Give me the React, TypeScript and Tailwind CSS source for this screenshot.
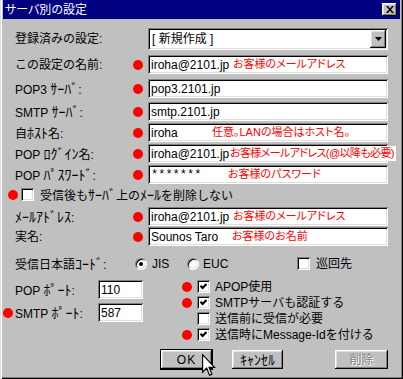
import React from 'react';

const sunken =
  'bg-white shadow-[inset_1px_1px_#808080,inset_-1px_-1px_#ffffff,inset_2px_2px_#000000,inset_-2px_-2px_#dfdfdf]';
const raised =
  'bg-[#c0c0c0] shadow-[inset_-1px_-1px_#000000,inset_1px_1px_#ffffff,inset_-2px_-2px_#808080,inset_2px_2px_#dfdfdf]';

// half-width katakana looks too small in Noto at 12px, bump it a bit
function K({ children }: { children: React.ReactNode }) {
  return <span className="text-[14px]">{children}</span>;
}

function Dot() {
  return <span className="block w-[10px] h-[10px] shrink-0 rounded-full bg-[#ff0000]" />;
}

function Check({ checked }: { checked?: boolean }) {
  return (
    <span className={`relative block w-[13px] h-[13px] shrink-0 ${sunken}`}>
      {checked && (
        <svg className="absolute left-[3px] top-[3px]" width="7" height="7" viewBox="0 0 7 7">
          <polyline points="0.6,2.8 2.6,4.9 6.5,0.9" fill="none" stroke="#000" strokeWidth="2.2" />
        </svg>
      )}
    </span>
  );
}

function Radio({ on }: { on?: boolean }) {
  return (
    <span className="relative block w-[12px] h-[12px] shrink-0 rounded-full bg-white border border-t-[#808080] border-l-[#808080] border-r-white border-b-white shadow-[inset_1px_1px_#000000,inset_-1px_-1px_#dfdfdf]">
      {on && <span className="absolute left-[3px] top-[3px] w-[4px] h-[4px] rounded-full bg-black" />}
    </span>
  );
}

type Row = {
  id: string;
  label: React.ReactNode;
  value: string;
  valueCls?: string;
  note?: string;
  noteCls?: string;
  gap: string;
};

const topRows: Row[] = [
  { id: 'name', label: 'この設定の名前:', value: 'iroha@2101.jp', note: 'お客様のメールアドレス', noteCls: 'left-[85px]', gap: 'mt-[5px]' },
  { id: 'pop3', label: <>POP3 <K>ｻｰﾊﾞ</K>:</>, value: 'pop3.2101.jp', gap: 'mt-[5px]' },
  { id: 'smtp', label: <>SMTP <K>ｻｰﾊﾞ</K>:</>, value: 'smtp.2101.jp', gap: 'mt-[4px]' },
  {
    id: 'host',
    label: <>自<K>ﾎｽﾄ</K>名:</>,
    value: 'iroha',
    note: '任意。LANの場合はホスト名。',
    noteCls: 'left-[64px]',
    gap: 'mt-[2px]',
  },
  {
    id: 'login',
    label: <>POP <K>ﾛｸﾞｲﾝ</K>名:</>,
    value: 'iroha@2101.jp',
    note: 'お客様メールアドレス(@以降も必要)',
    noteCls: 'left-[82px] tracking-[-0.6px]',
    gap: 'mt-[2px]',
  },
  {
    id: 'pass',
    label: <>POP <K>ﾊﾟｽﾜｰﾄﾞ</K>:</>,
    value: '*******',
    valueCls: "font-['Liberation_Mono',monospace] text-[12px]",
    note: 'お客様のパスワード',
    noteCls: 'left-[80px]',
    gap: 'mt-[2px]',
  },
];

const userRows: Row[] = [
  {
    id: 'mail',
    label: <><K>ﾒｰﾙｱﾄﾞﾚｽ</K>:</>,
    value: 'iroha@2101.jp',
    note: 'お客様のメールアドレス',
    noteCls: 'left-[85px]',
    gap: 'mt-[6px]',
  },
  { id: 'real', label: '実名:', value: 'Sounos Taro', note: 'お客様のお名前', noteCls: 'left-[84px]', gap: 'mt-[1px]' },
];

const options = [
  { text: 'APOP使用', dot: true, checked: true },
  { text: 'SMTPサーバも認証する', dot: true, checked: true },
  { text: '送信前に受信が必要', dot: false, checked: false },
  { text: '送信時にMessage-Idを付ける', dot: true, checked: true },
];

function FieldRow({ row }: { row: Row }) {
  return (
    <div className={`${row.gap} flex h-[19px] items-center`}>
      <span className="w-[118px] shrink-0">{row.label}</span>
      <span className="w-[15px] shrink-0">
        <Dot />
      </span>
      <div className={`relative flex w-[240px] h-[19px] items-center pl-[3px] ${sunken}`}>
        <span className={row.valueCls}>{row.value}</span>
        {row.note && (
          <span
            className={`absolute top-[2px] ${row.noteCls} flex h-[15px] items-center whitespace-nowrap bg-white pr-[2px] text-[11px] text-[#ff0000] [font-feature-settings:'palt']`}
          >
            {row.note}
          </span>
        )}
      </div>
    </div>
  );
}

export default function App() {
  return (
    <div className="relative w-[403px] h-[379px] overflow-hidden bg-[#c0c0c0] px-[3px] font-['Liberation_Sans','Noto_Sans_CJK_JP',sans-serif] text-[12px] leading-none text-black shadow-[inset_1px_0_#dfdfdf,inset_2px_0_#ffffff,inset_-1px_-1px_#000000,inset_-2px_-2px_#808080]">
      {/* title bar */}
      <div className="flex h-[19px] items-center justify-between bg-[#000080] pl-[2px] pr-[3px]">
        <span className="text-white [font-feature-settings:'palt']">サーバ別の設定</span>
        <span className={`flex w-[15px] h-[13px] items-center justify-center ${raised}`}>
          <svg width="8" height="7" viewBox="0 0 8 7">
            <path d="M0 0h2l2 2.4L6 0h2L5 3.5 8 7H6L4 4.6 2 7H0l3-3.5z" fill="#000" />
          </svg>
        </span>
      </div>

      <div className="flex flex-col pl-[12px]">
        {/* saved settings */}
        <div className="mt-[9px] flex h-[22px] items-center">
          <span className="w-[133px] shrink-0">登録済みの設定:</span>
          <div className={`relative flex w-[240px] h-[22px] items-center pl-[4px] ${sunken}`}>
            <span>[ 新規作成 ]</span>
            <span className={`absolute right-[2px] top-[2px] flex w-[16px] h-[18px] items-center justify-center ${raised}`}>
              <svg width="7" height="4" viewBox="0 0 7 4">
                <polygon points="0,0 7,0 3.5,4" fill="#000" />
              </svg>
            </span>
          </div>
        </div>

        {topRows.map((r) => (
          <FieldRow key={r.id} row={r} />
        ))}

        {/* delete-on-server */}
        <div className="mt-[4px] -ml-[12px] flex h-[13px] items-center pl-[5px]">
          <Dot />
          <span className="ml-[3px]">
            <Check />
          </span>
          <span className="ml-[6px]">
            受信後も<K>ｻｰﾊﾞ</K>上の<K>ﾒｰﾙ</K>を削除しない
          </span>
        </div>

        {userRows.map((r) => (
          <FieldRow key={r.id} row={r} />
        ))}

        {/* encoding */}
        <div className="mt-[11px] flex h-[13px] items-center">
          <span className="w-[120px] shrink-0">
            受信日本語<K>ｺｰﾄﾞ</K>:
          </span>
          <span className="flex w-[52px] items-center">
            <Radio on />
            <span className="ml-[5px]">JIS</span>
          </span>
          <span className="flex w-[110px] items-center">
            <Radio />
            <span className="ml-[4px]">EUC</span>
          </span>
          <Check />
          <span className="ml-[6px]">巡回先</span>
        </div>

        {/* ports + options */}
        <div className="mt-[10px] flex">
          <div className="flex w-[128px] shrink-0 flex-col">
            <div className="-ml-[12px] flex h-[19px] items-center">
              <span className="w-[12px] shrink-0" />
              <span className="w-[83px] shrink-0">
                POP <K>ﾎﾟｰﾄ</K>:
              </span>
              <div className={`flex w-[45px] h-[19px] items-center pl-[3px] ${sunken}`}>110</div>
            </div>
            <div className="mt-[4px] -ml-[12px] flex h-[19px] items-center">
              <span className="w-[12px] shrink-0">
                <Dot />
              </span>
              <span className="w-[83px] shrink-0">
                SMTP <K>ﾎﾟｰﾄ</K>:
              </span>
              <div className={`flex w-[45px] h-[19px] items-center pl-[3px] ${sunken}`}>587</div>
            </div>
          </div>
          <div className="ml-[39px] flex flex-col gap-[3px]">
            {options.map((o) => (
              <div key={o.text} className="flex h-[13px] items-center">
                <span className="w-[15px] shrink-0">{o.dot && <Dot />}</span>
                <Check checked={o.checked} />
                <span className="ml-[5px]">{o.text}</span>
              </div>
            ))}
          </div>
        </div>

        {/* buttons */}
        <div className="mt-[8px] flex items-start">
          <div className="ml-[145px] w-[53px] h-[21px] border border-black">
            <div className={`flex h-full items-center justify-center tracking-[1px] ${raised}`}>OK</div>
          </div>
          <div className={`ml-[19px] mt-[1px] flex w-[51px] h-[19px] items-center justify-center ${raised}`}>
            <K>ｷｬﾝｾﾙ</K>
          </div>
          <div
            className={`ml-[52px] mt-[1px] flex w-[53px] h-[19px] items-center justify-center text-[#808080] [text-shadow:1px_1px_0_#ffffff] ${raised}`}
          >
            削除
          </div>
        </div>
      </div>

      {/* mouse pointer over OK */}
      <svg className="absolute left-[202px] top-[354px]" width="14" height="23" viewBox="0 0 12 19.5">
        <path
          d="M0.5 0.5 L0.5 15.5 L4 12 L6.5 18 L8.5 17.2 L6 11.3 L10.8 11.3 Z"
          fill="#ffffff"
          stroke="#000000"
          strokeWidth="1"
          strokeLinejoin="miter"
        />
      </svg>
    </div>
  );
}
